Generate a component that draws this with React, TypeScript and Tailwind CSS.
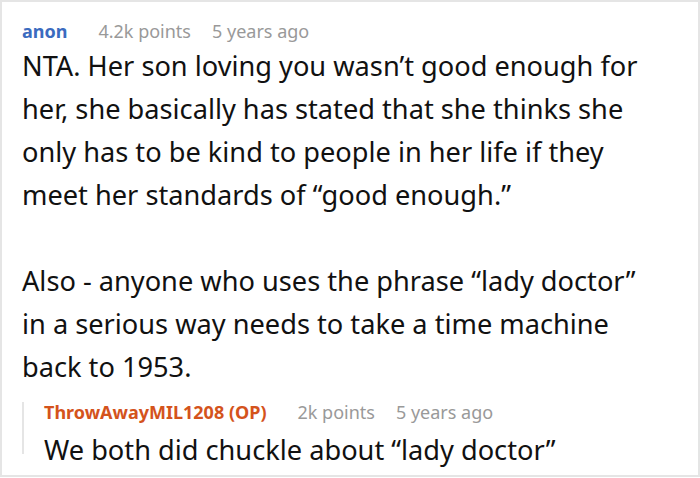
export default function App() {
  return (
    <div className="w-[700px] h-[478px] bg-white" style={{ fontFamily: '"Noto Sans", "Open Sans", sans-serif' }}>
      <div className="h-[477px] border-2 border-[#e5e5e5] pl-[20px] pr-[38px] pt-[15px] overflow-hidden">
        {/* Comment header */}
        <div className="flex items-baseline text-[18px] leading-[28px]">
          <span className="font-bold text-[#3b6bbf]">anon</span>
          <span className="ml-[31px] text-[#999999]">4.2k points</span>
          <span className="ml-[21px] text-[#999999]">5 years ago</span>
        </div>

        {/* Comment body */}
        <div className="text-[27.2px] leading-[43px] text-[#111111] -mt-[1px]">
          <p>
            NTA. Her son loving you wasn’t good enough for her, she basically has stated that she thinks she only has to be
            kind to people in her life if they meet her standards of “good enough.”
          </p>
          <p className="mt-[43px]">
            Also - anyone who uses the phrase “lady doctor” in a serious way needs to take a time machine back to 1953.
          </p>
        </div>

        {/* Reply */}
        <div className="mt-[10px] flex">
          <div className="w-[2px] h-[52px] mt-[4px] bg-[#e5e5e5] shrink-0" />
          <div className="pl-[20px]">
            <div className="flex items-baseline text-[18px] leading-[28px]">
              <span className="font-bold text-[#d4531c]">ThrowAwayMIL1208 (OP)</span>
              <span className="ml-[31px] text-[#999999]">2k points</span>
              <span className="ml-[21px] text-[#999999]">5 years ago</span>
            </div>
            <p className="text-[27.2px] leading-[43px] text-[#111111] mt-[2px] whitespace-nowrap">We both did chuckle about “lady doctor”</p>
          </div>
        </div>
      </div>
    </div>
  );
}
